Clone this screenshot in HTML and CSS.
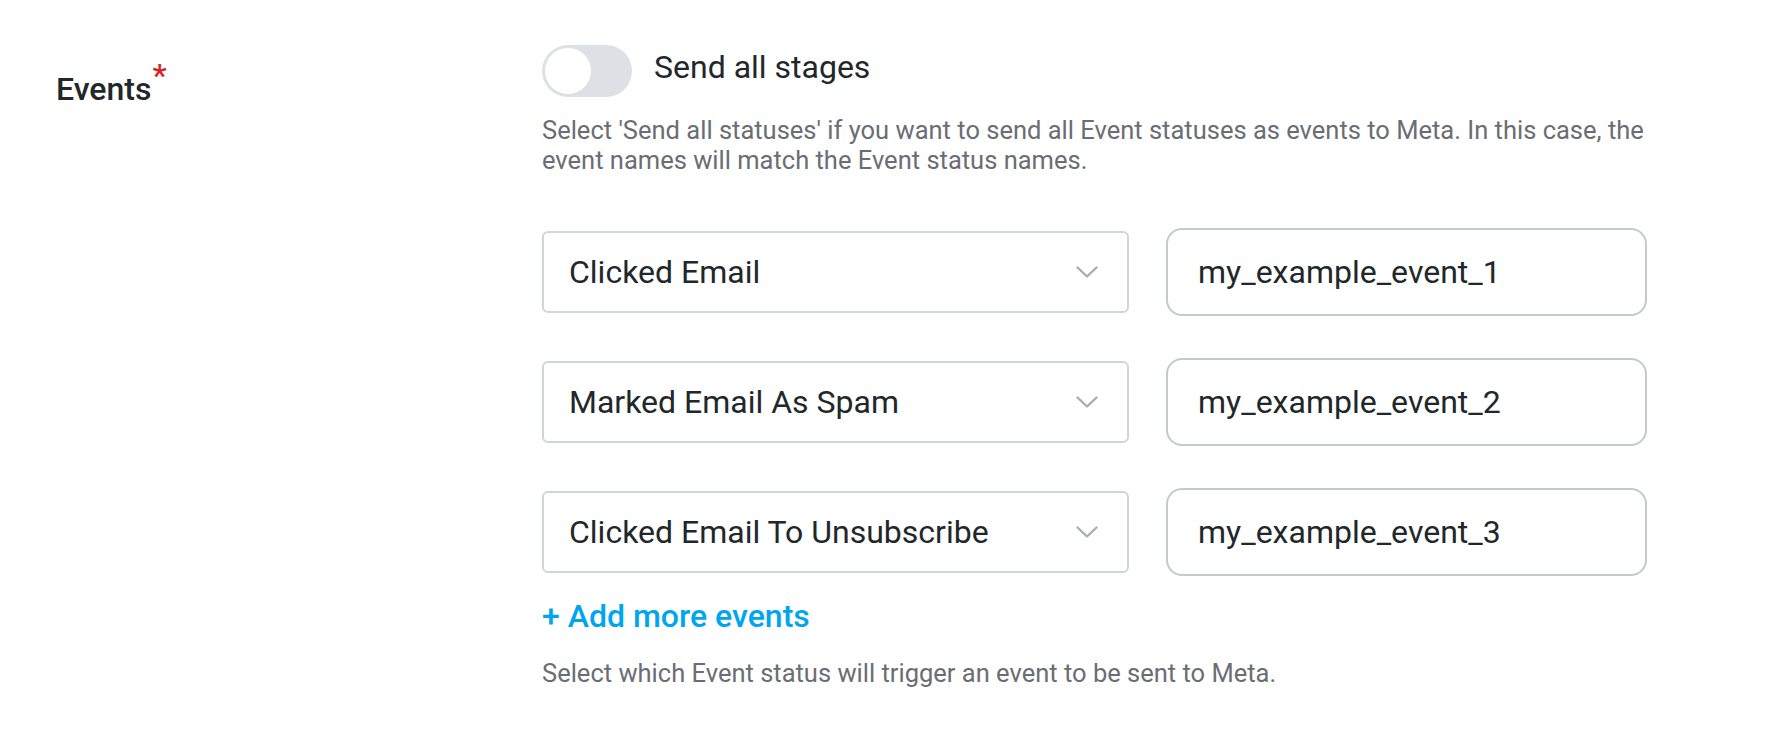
FILE: index.html
```html
<!DOCTYPE html>
<html lang="en">
<head>
    <meta charset="UTF-8">
    <meta name="viewport" content="width=device-width, initial-scale=1.0">
    <title>Events</title>
    <link rel="stylesheet" href="styles.css">
</head>
<body>
    <div class="field">
        <div class="field-label">Events<span class="required">*</span></div>
        <div class="field-body">
            <label class="switch-row">
                <span class="switch"><span class="knob"></span></span>
                <span class="switch-text">Send all stages</span>
            </label>
            <p class="hint">Select 'Send all statuses' if you want to send all Event statuses as events to Meta. In this case, the event names will match the Event status names.</p>

            <div class="event-rows">
                <div class="event-row">
                    <div class="select">
                        <span>Clicked Email</span>
                        <svg class="chevron" width="22" height="12" viewBox="0 0 22 12"><path d="M1.5 1.5 L11 10.5 L20.5 1.5" fill="none" stroke="#a7adb4" stroke-width="2.4" stroke-linecap="round" stroke-linejoin="round"/></svg>
                    </div>
                    <input class="event-name" type="text" value="my_example_event_1">
                </div>
                <div class="event-row">
                    <div class="select">
                        <span>Marked Email As Spam</span>
                        <svg class="chevron" width="22" height="12" viewBox="0 0 22 12"><path d="M1.5 1.5 L11 10.5 L20.5 1.5" fill="none" stroke="#a7adb4" stroke-width="2.4" stroke-linecap="round" stroke-linejoin="round"/></svg>
                    </div>
                    <input class="event-name" type="text" value="my_example_event_2">
                </div>
                <div class="event-row">
                    <div class="select">
                        <span>Clicked Email To Unsubscribe</span>
                        <svg class="chevron" width="22" height="12" viewBox="0 0 22 12"><path d="M1.5 1.5 L11 10.5 L20.5 1.5" fill="none" stroke="#a7adb4" stroke-width="2.4" stroke-linecap="round" stroke-linejoin="round"/></svg>
                    </div>
                    <input class="event-name" type="text" value="my_example_event_3">
                </div>
            </div>

            <a class="add-link" href="#">+ Add more events</a>
            <p class="hint hint-bottom">Select which Event status will trigger an event to be sent to Meta.</p>
        </div>
    </div>
</body>
</html>
```

FILE: styles.css
```css
body {
    margin: 0;
    font-family: Roboto, "Noto Sans", sans-serif;
    color: #21272a;
    background-color: #ffffff;
}
.field {
    display: flex;
    padding-left: 56px;
}
.field-label {
    width: 486px;
    flex-shrink: 0;
    margin-top: 69px;
    font-size: 32px;
    font-weight: 500;
    line-height: 40px;
}
.required {
    color: #da1e28;
    margin-left: 1px;
    line-height: 0;
    vertical-align: 14px;
}
.field-body {
    width: 1140px;
    padding-top: 45px;
}
.switch-row {
    display: flex;
    align-items: center;
    gap: 22px;
    cursor: pointer;
}
.switch {
    display: flex;
    width: 90px;
    height: 52px;
    padding: 3px;
    box-sizing: border-box;
    border-radius: 26px;
    background-color: #dde1e6;
}
.knob {
    width: 46px;
    height: 46px;
    border-radius: 50%;
    background-color: #ffffff;
}
.switch-text {
    font-size: 32px;
    line-height: 40px;
    margin-bottom: 8px;
}
.hint {
    margin: 18px 0 0;
    font-size: 25.5px;
    line-height: 30px;
    color: #6a6e73;
}
.event-rows {
    display: flex;
    flex-direction: column;
    gap: 42px;
    margin-top: 53px;
}
.event-row {
    display: flex;
    align-items: center;
    gap: 37px;
}
.select {
    display: flex;
    align-items: center;
    justify-content: space-between;
    width: 587px;
    height: 82px;
    padding: 0 29px 0 25px;
    box-sizing: border-box;
    border: 2px solid #d0d5dc;
    border-radius: 6px;
    font-size: 32px;
    cursor: pointer;
}
.chevron {
    flex-shrink: 0;
}
.event-name {
    width: 481px;
    height: 88px;
    padding: 0 30px;
    box-sizing: border-box;
    border: 2px solid #c3c9d0;
    border-radius: 16px;
    font-family: Roboto, "Noto Sans", sans-serif;
    font-size: 32px;
    color: #21272a;
    outline: none;
}
.add-link {
    display: inline-block;
    margin-top: 20px;
    font-size: 32px;
    font-weight: 500;
    line-height: 40px;
    color: #00a5f2;
    text-decoration: none;
}
.hint-bottom {
    margin-top: 22px;
}
```
